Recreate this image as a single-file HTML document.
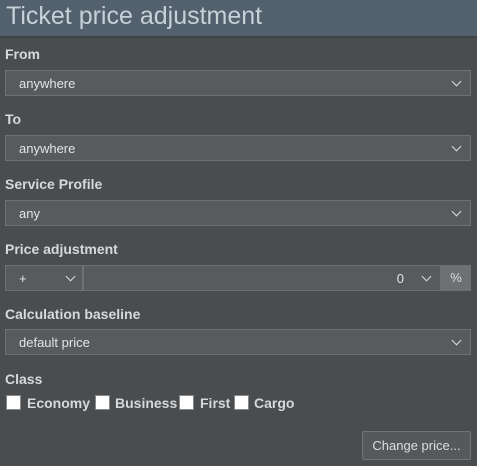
<!DOCTYPE html>
<html><head><style>
body{margin:0;width:477px;height:466px;background:#4a4d50;font-family:"Liberation Sans",sans-serif;position:relative;overflow:hidden;color:#e0e0e0}
.hd{position:absolute;left:0;top:0;width:477px;height:36px;background:#53606e;border-bottom:2px solid #3f4348}
.hd span{position:absolute;left:6px;top:2px;font-size:25px;color:#c8d0d8}
.lb{position:absolute;left:5px;font-size:14px;font-weight:bold;color:#d8d8d8}
.sel{position:absolute;left:5px;width:464px;height:24px;background:#585b5d;border:1px solid #6e7173;font-size:13px;color:#e4e4e4}
.sel span{position:absolute;left:13px;top:5px}
.ch{position:absolute;width:6px;height:6px;border-right:1.5px solid #ddd;border-bottom:1.5px solid #ddd;transform:rotate(45deg)}
.cb{position:absolute;top:395px;width:13px;height:13px;background:#fff;border:1px solid #888}
.ct{position:absolute;top:395px;font-size:14px;font-weight:bold;color:#d8d8d8}
</style></head><body>
<div class="hd"><span>Ticket price adjustment</span></div>
<div class="lb" style="top:46px">From</div>
<div class="sel" style="top:70px"><span>anywhere</span><div class="ch" style="right:10px;top:7px"></div></div>
<div class="lb" style="top:111px">To</div>
<div class="sel" style="top:135px"><span>anywhere</span><div class="ch" style="right:10px;top:7px"></div></div>
<div class="lb" style="top:176px">Service Profile</div>
<div class="sel" style="top:200px"><span>any</span><div class="ch" style="right:10px;top:7px"></div></div>
<div class="lb" style="top:241px">Price adjustment</div>
<div class="sel" style="top:265px;width:76px"><span>+</span><div class="ch" style="right:8px;top:7px"></div></div>
<div class="sel" style="top:265px;left:83px;width:356px"><span style="left:auto;right:36px">0</span><div class="ch" style="right:10px;top:7px"></div></div>
<div style="position:absolute;left:441px;top:265px;width:30px;height:26px;background:#6e7173;font-size:13px;color:#ddd;text-align:center;line-height:26px">%</div>
<div class="lb" style="top:306px">Calculation baseline</div>
<div class="sel" style="top:329px"><span>default price</span><div class="ch" style="right:10px;top:7px"></div></div>
<div class="lb" style="top:371px">Class</div>
<div class="cb" style="left:6px"></div><div class="ct" style="left:27px">Economy</div>
<div class="cb" style="left:95px"></div><div class="ct" style="left:115px">Business</div>
<div class="cb" style="left:179px"></div><div class="ct" style="left:200px">First</div>
<div class="cb" style="left:234px"></div><div class="ct" style="left:254px">Cargo</div>
<div style="position:absolute;left:362px;top:431px;width:107px;height:27px;background:#56595b;border:1px solid #717476;border-radius:2px;font-size:13px;color:#ddd;text-align:center;line-height:27px">Change price...</div>
</body></html>
